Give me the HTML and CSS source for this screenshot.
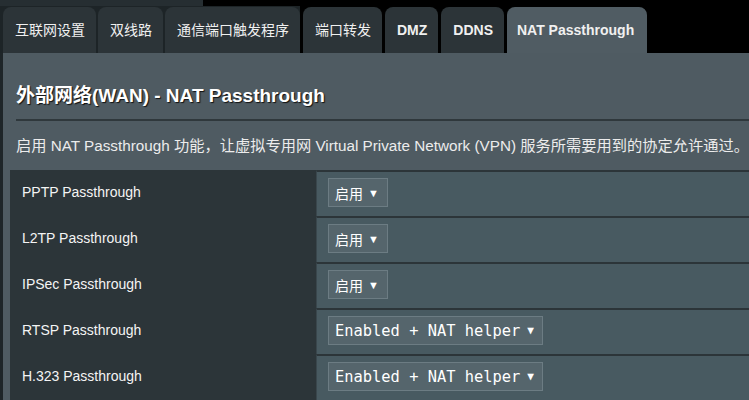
FILE: index.html
```html
<!DOCTYPE html>
<html lang="zh-CN">
<head>
  <meta charset="UTF-8">
  <title>NAT Passthrough</title>
  <link rel="stylesheet" href="styles.css">
</head>
<body>
  <div class="tabs">
    <div class="tab-group">
      <div class="tab">互联网设置</div>
      <div class="tab">双线路</div>
      <div class="tab">通信端口触发程序</div>
    </div>
    <div class="tab">端口转发</div>
    <div class="tab latin">DMZ</div>
    <div class="tab latin">DDNS</div>
    <div class="tab latin active">NAT Passthrough</div>
  </div>

  <div class="panel">
    <h1 class="title">外部网络(WAN) - NAT Passthrough</h1>
    <div class="rule"></div>
    <p class="desc">启用 NAT Passthrough 功能，让虚拟专用网 Virtual Private Network (VPN) 服务所需要用到的协定允许通过。</p>

    <div class="settings">
      <div class="row">
        <div class="label">PPTP Passthrough</div>
        <div class="value"><div class="select"><span>启用</span><span class="arrow">▼</span></div></div>
      </div>
      <div class="row">
        <div class="label">L2TP Passthrough</div>
        <div class="value"><div class="select"><span>启用</span><span class="arrow">▼</span></div></div>
      </div>
      <div class="row">
        <div class="label">IPSec Passthrough</div>
        <div class="value"><div class="select"><span>启用</span><span class="arrow">▼</span></div></div>
      </div>
      <div class="row">
        <div class="label">RTSP Passthrough</div>
        <div class="value"><div class="select mono"><span>Enabled + NAT helper</span><span class="arrow">▼</span></div></div>
      </div>
      <div class="row">
        <div class="label">H.323 Passthrough</div>
        <div class="value"><div class="select mono"><span>Enabled + NAT helper</span><span class="arrow">▼</span></div></div>
      </div>
    </div>
  </div>
</body>
</html>
```

FILE: styles.css
```css
body {
  margin: 0;
  background-color: #1e2528;
  font-family: "Liberation Sans", Arial, "Noto Sans CJK SC", sans-serif;
  color: #f2f2f2;
  overflow: hidden;
}
.tabs {
  display: flex;
  align-items: flex-end;
  gap: 3px;
  height: 53px;
  background-color: #000;
}
.tab-group {
  display: flex;
  align-items: flex-end;
  gap: 2px;
  height: 53px;
  padding-left: 3px;
  background: linear-gradient(to right, #262e32 203px, #000 203px) 0 0 / 100% 6px no-repeat, #1d2427;
}
.tab {
  height: 46px;
  line-height: 46px;
  padding: 0 11px 0 12px;
  font-size: 14px;
  color: #f0f0f0;
  background-color: #2c3438;
  border-radius: 8px 8px 0 0;
  white-space: nowrap;
}
.tab.latin {
  font-weight: bold;
}
.tab.active {
  background-color: #505c63;
  padding: 0 13px 0 10px;
}
.panel {
  margin-left: 3px;
  height: 347px;
  padding-top: 31px;
  box-sizing: border-box;
  background-color: #4f5b62;
}
.title {
  margin: 0 0 0 13px;
  font-size: 19px;
  line-height: 24px;
  font-weight: bold;
  color: #fff;
  text-shadow: 1px 1px 1px #111;
}
.rule {
  margin: 11px 0 0 13px;
  height: 2px;
  background-color: #2f383c;
}
.desc {
  margin: 15px 0 0 13px;
  font-size: 15.25px;
  line-height: 20px;
  color: #ececec;
  white-space: nowrap;
}
.settings {
  margin: 14px 0 0 7px;
}
.row {
  display: flex;
  height: 46px;
}
.label {
  width: 294px;
  padding-left: 12px;
  line-height: 44px;
  font-size: 14px;
  color: #f4f4f4;
  background-color: #2c3539;
}
.value {
  flex: 1;
  display: flex;
  align-items: center;
  padding-left: 11px;
  padding-bottom: 3px;
  background-color: #485a61;
  border-top: 2px solid #2c3539;
  border-left: 1px solid #3a474d;
}
.select {
  display: flex;
  align-items: center;
  height: 27px;
  padding: 0 8px 0 6px;
  background-color: #55656c;
  border: 1px solid #6c7c83;
  font-size: 14px;
  color: #fff;
}
.select .arrow {
  margin-left: 5px;
  font-size: 11px;
}
.select.mono {
  font-family: "DejaVu Sans Mono", monospace;
  font-size: 15.4px;
}
.select.mono .arrow {
  margin-left: 7px;
}
```
